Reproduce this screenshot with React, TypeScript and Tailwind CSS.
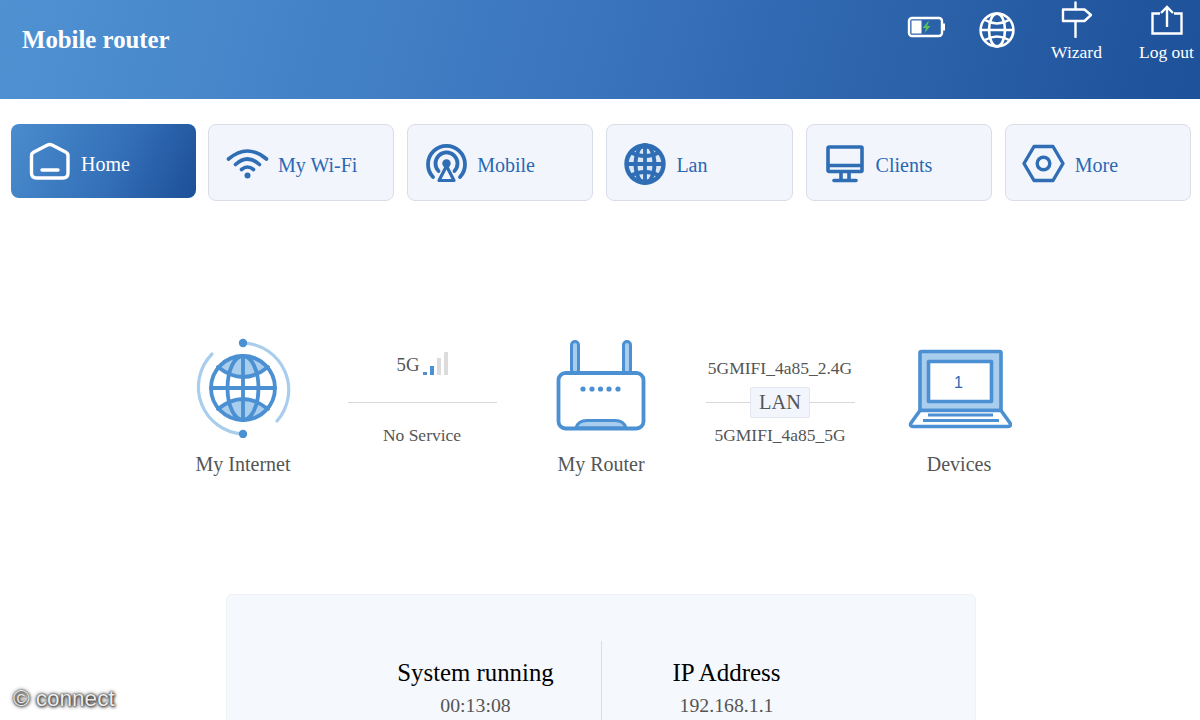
import React from "react";

const NAV = "#2f6db5";
const BLUE = "#4a90d2";
const LIGHT = "#a9cdec";

function HomeIcon() {
  return (
    <svg width="44" height="44" viewBox="0 0 44 44" fill="none" stroke="#fff" strokeWidth="3.4" strokeLinejoin="round" strokeLinecap="round">
      <path d="M3.5 14.5 Q3.5 12.5 5.5 11.3 L19.5 4 Q21.7 3 24 4 L38 11.3 Q40 12.5 40 14.5 V32 Q40 37 35 37 H8.5 Q3.5 37 3.5 32 Z" />
      <path d="M14 29 H30" />
    </svg>
  );
}
function WifiIcon() {
  return (
    <svg width="44" height="44" viewBox="0 0 44 44" fill="none" stroke={NAV} strokeWidth="3.6" strokeLinecap="round">
      <path d="M3.5 17 Q22.5 1 41.5 17" />
      <path d="M10.5 22.5 Q22.5 11.5 34.5 22.5" />
      <path d="M16.5 27.5 Q22.5 22.5 28.5 27.5" />
      <circle cx="22.5" cy="33.5" r="3" fill={NAV} stroke="none" />
    </svg>
  );
}
function MobileIcon() {
  return (
    <svg width="44" height="44" viewBox="0 0 44 44" fill="none" stroke={NAV} strokeWidth="3.8" strokeLinecap="round" strokeLinejoin="round">
      <path d="M9 35 A18.5 18.5 0 1 1 36 35" />
      <path d="M14.5 29 A11 11 0 1 1 30.5 29" />
      <circle cx="22.5" cy="21.5" r="4.2" fill={NAV} stroke="none" />
      <path d="M22.5 24 L15 38.5 H30 Z" strokeWidth="3.2" />
    </svg>
  );
}
function LanIcon() {
  return (
    <svg width="44" height="44" viewBox="0 0 44 44" fill="#dbe6f5" stroke={NAV} strokeWidth="4.4">
      <circle cx="22" cy="22" r="18.5" />
      <ellipse cx="22" cy="22" rx="9.5" ry="19" fill="none" strokeWidth="3.8" />
      <path d="M22 3 V41 M3 22 H41" fill="none" strokeWidth="3.8" />
      <path d="M7 10 Q22 18 37 10 M7 34 Q22 26 37 34" fill="none" strokeWidth="3.8" />
      <path d="M22 3 A19 19 0 0 0 8.5 9 Q22 4 35.5 9 A19 19 0 0 0 22 3 Z M8.5 35 Q22 40 35.5 35 A19 19 0 0 1 8.5 35 Z" fill={NAV} stroke="none" />
    </svg>
  );
}
function ClientsIcon() {
  return (
    <svg width="44" height="44" viewBox="0 0 44 44" fill="none" stroke={NAV} strokeWidth="3.6" strokeLinecap="round" strokeLinejoin="round">
      <rect x="5" y="5" width="34" height="24.5" rx="1" />
      <path d="M6 23.5 H38" />
      <path d="M18 29 V38 M26 29 V38" strokeLinecap="butt" />
      <path d="M11 38.5 H33" />
    </svg>
  );
}
function MoreIcon() {
  return (
    <svg width="44" height="44" viewBox="0 0 44 44" fill="none" stroke={NAV} strokeWidth="3.4" strokeLinejoin="round">
      <path d="M2 21.5 L12 4.5 H31 L41 21.5 L31 38.5 H12 Z" />
      <circle cx="21.5" cy="21.5" r="6.3" />
    </svg>
  );
}

function Tab({ label, icon, active }: { label: string; icon: React.ReactNode; active?: boolean }) {
  if (active) {
    return (
      <div className="-mr-[1px] flex h-[74px] w-[185px] shrink-0 items-center gap-[9px] rounded-[8px] border border-transparent bg-[linear-gradient(115deg,#4a8ccd_0%,#3470b8_55%,#1c4f97_100%)] bg-origin-border pl-[16px] text-[20px] text-white">
        <span className="mt-[4px] flex h-[44px] w-[44px] shrink-0">{icon}</span>
        <span className="mt-[6px]">{label}</span>
      </div>
    );
  }
  return (
    <div className="flex h-[77px] flex-1 items-center gap-[9px] rounded-[8px] border border-[#d9dde8] bg-[#f2f5fc] pl-[16px] text-[20px] text-[#2a68b4]">
      <span className="mt-[2px] flex h-[44px] w-[44px] shrink-0">{icon}</span>
      <span className="mt-[4px]">{label}</span>
    </div>
  );
}

function InternetIcon() {
  return (
    <svg width="102" height="100" viewBox="0 0 102 100" fill="none" strokeLinecap="round">
      <path d="M51 5 A47 47 0 0 1 85 83" stroke={LIGHT} strokeWidth="3.2" />
      <path d="M20 16 A47 47 0 0 0 51 96" stroke={LIGHT} strokeWidth="3.2" />
      <circle cx="51" cy="5" r="4.2" fill={BLUE} />
      <circle cx="51" cy="96" r="4.2" fill={BLUE} />
      <path d="M26 29 A32 32 0 0 1 76 29 Q51 49 26 29 Z" fill={LIGHT} />
      <path d="M26 71 A32 32 0 0 0 76 71 Q51 51 26 71 Z" fill={LIGHT} />
      <g stroke={BLUE} strokeWidth="3.8">
        <circle cx="51" cy="50" r="32" />
        <ellipse cx="51" cy="50" rx="15.5" ry="32" />
        <path d="M51 18 V82 M19 50 H83" />
        <path d="M26 29 Q51 49 76 29 M26 71 Q51 51 76 71" />
      </g>
    </svg>
  );
}
function RouterIcon() {
  return (
    <svg width="92" height="100" viewBox="0 0 92 100" fill="none">
      <rect x="16.5" y="3.5" width="7" height="32" rx="3.5" fill={LIGHT} stroke={BLUE} strokeWidth="3" />
      <rect x="68.5" y="3.5" width="7" height="32" rx="3.5" fill={LIGHT} stroke={BLUE} strokeWidth="3" />
      <path d="M21 90 Q23 82.5 32 82.5 H60 Q69 82.5 71 90 Z" fill={LIGHT} stroke={BLUE} strokeWidth="3" />
      <rect x="3.5" y="35" width="85" height="55.5" rx="7" fill="none" stroke={BLUE} strokeWidth="3.8" />
      {[28, 37, 45.5, 54, 63].map((x) => (
        <circle key={x} cx={x} cy="51" r="2.6" fill={BLUE} />
      ))}
    </svg>
  );
}
function LaptopIcon() {
  return (
    <svg width="106" height="100" viewBox="0 0 106 100" fill="none" stroke={BLUE} strokeWidth="3.6" strokeLinejoin="round">
      <rect x="14" y="13.5" width="81" height="59" rx="1.5" fill={LIGHT} />
      <rect x="22.5" y="23.5" width="63" height="40" fill="#fff" />
      <path d="M14 72.5 L5 85 Q3.5 88.5 7 88.5 H102 Q105.5 88.5 104 85 L95 72.5 Z" fill="#fff" />
      <path d="M22 77 H87 M17 82.5 H93" strokeWidth="3" />
      <text x="52.5" y="50" textAnchor="middle" fontFamily="'Liberation Sans', sans-serif" fontSize="16" fill="#2a68b4" stroke="none">1</text>
    </svg>
  );
}

function LineWithLabel({ label }: { label?: string }) {
  return (
    <div className="flex h-[31px] w-[149px] items-center">
      <div className="h-px flex-1 bg-[#d8d8d8]" />
      {label ? (
        <div className="flex h-[31px] w-[60px] items-center justify-center rounded-[2px] border border-[#e3e7ef] bg-[#f2f5fc] text-[20.4px] text-[#555]">
          {label}
        </div>
      ) : null}
      <div className="h-px flex-1 bg-[#d8d8d8]" />
    </div>
  );
}

export default function App() {
  return (
    <div className="relative h-[720px] w-full overflow-hidden bg-white font-['Liberation_Serif',serif]">
      <header className="flex h-[99px] items-start justify-between bg-[linear-gradient(105deg,#4f92d2_0%,#3a74bc_50%,#1d5199_100%)] pl-[22px] pr-[6px] text-white">
        <h1 className="mt-[25px] text-[24.8px] font-bold leading-[30px]">Mobile router</h1>
        <div className="flex items-start">
          <svg className="mt-[16px]" width="40" height="22" viewBox="0 0 40 22" fill="none">
            <rect x="2" y="2" width="33" height="18" rx="3" stroke="#fff" strokeWidth="2.4" />
            <rect x="4.5" y="4.5" width="10" height="13" fill="#fff" />
            <path d="M35 7.5 H38 V14.5 H35 Z" fill="#fff" />
            <path d="M21 5.5 L15.5 12 H19 L17.5 17 L23.5 10 H20 L22 5.5 Z" fill="#5cc25f" />
          </svg>
          <svg className="ml-[32px] mt-[12px]" width="36" height="36" viewBox="0 0 36 36" fill="none" stroke="#fff" strokeWidth="2.6">
            <circle cx="18" cy="18" r="16.4" />
            <ellipse cx="18" cy="18" rx="8" ry="16.4" />
            <path d="M6 8 Q18 15 30 8 M6 28 Q18 21 30 28 M1.6 18 H34.4" />
          </svg>
          <div className="ml-[36px] flex w-[51px] flex-col items-center">
            <svg className="mt-[1px]" width="32" height="37" viewBox="0 0 32 37" fill="none" stroke="#fff" strokeWidth="2.4" strokeLinejoin="round" strokeLinecap="round">
              <path d="M14.5 1.5 V8 M14.5 20.5 V36" />
              <path d="M2 8.5 H23.5 L30 14 L23.5 20 H2 Z" />
            </svg>
            <span className="mt-[2px] text-[17.5px] leading-[24px]">Wizard</span>
          </div>
          <div className="ml-[37px] flex w-[55px] flex-col items-center">
            <svg className="mt-[4px]" width="32" height="34" viewBox="0 0 32 34" fill="none" stroke="#fff" strokeWidth="2.4" strokeLinejoin="miter">
              <path d="M9 9.5 H1.5 V29.5 H30.5 V9.5 H23" />
              <path d="M16 23 V3 M10 9 L16 3 L22 9" />
            </svg>
            <span className="mt-[2px] text-[17.5px] leading-[24px]">Log out</span>
          </div>
        </div>
      </header>

      <nav className="flex items-start gap-[13px] pl-[11px] pr-[9px] pt-[25px]">
        <Tab active label="Home" icon={<HomeIcon />} />
        <Tab label="My Wi-Fi" icon={<WifiIcon />} />
        <Tab label="Mobile" icon={<MobileIcon />} />
        <Tab label="Lan" icon={<LanIcon />} />
        <Tab label="Clients" icon={<ClientsIcon />} />
        <Tab label="More" icon={<MoreIcon />} />
      </nav>

      <section className="mt-[137px] flex pl-[153.5px] text-[#555]">
        <div className="flex w-[179px] flex-col items-center">
          <InternetIcon />
          <span className="mt-[14px] text-[20px] leading-[24px]">My Internet</span>
        </div>
        <div className="flex w-[179px] flex-col items-center pt-[16px]">
          <div className="flex h-[24px] items-end gap-[3px] pb-[3px] pl-[1px]">
            <span className="mr-[1px] self-center text-[18.8px] leading-[24px]">5G</span>
            <span className="h-[3px] w-[4px] bg-[#4a90d2]" />
            <span className="h-[9px] w-[4px] bg-[#4a90d2]" />
            <span className="h-[17px] w-[4px] bg-[#dcdcdc]" />
            <span className="h-[23px] w-[4px] bg-[#dcdcdc]" />
          </div>
          <div className="mt-[9px]"><LineWithLabel /></div>
          <span className="mt-[5px] text-[17.5px] leading-[24px]">No Service</span>
        </div>
        <div className="flex w-[179px] flex-col items-center">
          <RouterIcon />
          <span className="mt-[14px] text-[20px] leading-[24px]">My Router</span>
        </div>
        <div className="flex w-[179px] flex-col items-center pt-[18px]">
          <span className="text-[17.5px] leading-[24px]">5GMIFI_4a85_2.4G</span>
          <div className="mt-[7px]"><LineWithLabel label="LAN" /></div>
          <span className="mt-[5px] text-[17.5px] leading-[24px]">5GMIFI_4a85_5G</span>
        </div>
        <div className="flex w-[179px] flex-col items-center">
          <LaptopIcon />
          <span className="mt-[14px] text-[20px] leading-[24px]">Devices</span>
        </div>
      </section>

      <section className="ml-[226px] mt-[118px] flex w-[750px] justify-center rounded-[6px] border border-[#eef1f6] bg-[#f5f8fc] pb-[40px] pt-[46px]">
        <div className="flex w-[251px] flex-col items-center border-r border-[#d9dde4] pt-[14px]">
          <span className="text-[24.8px] leading-[36px] text-black">System running</span>
          <span className="-mt-[1px] text-[19.8px] leading-[30px] text-[#555]">00:13:08</span>
        </div>
        <div className="flex w-[250px] flex-col items-center pt-[14px]">
          <span className="text-[25px] leading-[36px] text-black">IP Address</span>
          <span className="-mt-[1px] text-[19.8px] leading-[30px] text-[#555]">192.168.1.1</span>
        </div>
      </section>

      <div className="absolute left-[13px] top-[685px] font-['Liberation_Sans',sans-serif] text-[22.5px] leading-[28px] text-[#ececec] [text-shadow:0_0_2px_#222,0_0_4px_#333,1px_1px_3px_#444]">
        © connect
      </div>
    </div>
  );
}
